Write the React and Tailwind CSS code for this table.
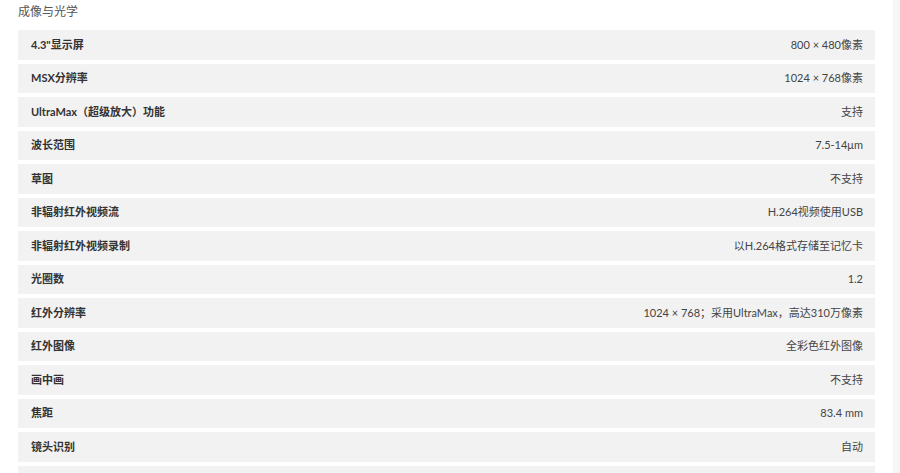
import React from 'react';

const specs = [
    ['4.3"显示屏', '800 × 480像素'],
    ['MSX分辨率', '1024 × 768像素'],
    ['UltraMax（超级放大）功能', '支持'],
    ['波长范围', '7.5-14μm'],
    ['草图', '不支持'],
    ['非辐射红外视频流', 'H.264视频使用USB'],
    ['非辐射红外视频录制', '以H.264格式存储至记忆卡'],
    ['光圈数', '1.2'],
    ['红外分辨率', '1024 × 768；采用UltraMax，高达310万像素'],
    ['红外图像', '全彩色红外图像'],
    ['画中画', '不支持'],
    ['焦距', '83.4 mm'],
    ['镜头识别', '自动'],
    ['', ''],
];

const App = () => {
    return (
        <div className="w-[900px] h-[473px] overflow-hidden bg-white flex font-['Lato','Noto_Sans_CJK_SC',sans-serif]">
            <div className="flex flex-col w-[875px] pl-[18px]">
                {/* Section title */}
                <p className="h-[30px] shrink-0 pt-[3px] text-[12px] text-[#555]">成像与光学</p>
                <div className="flex flex-col shrink-0 gap-[4px]">
                    {specs.map(([label, value], i) => (
                        <div key={i} className="flex items-center justify-between h-[29.5px] shrink-0 bg-[#f2f2f2] pl-[13px] pr-[12px]">
                            <span className="text-[11px] font-bold text-[#333]">{label}</span>
                            <span className="text-[11px] text-[#444]">{value}</span>
                        </div>
                    ))}
                </div>
            </div>
            <div className="w-[18px]" />
            <div className="flex-1 bg-[#f6f6f6]" />
        </div>
    );
};

export default App;
